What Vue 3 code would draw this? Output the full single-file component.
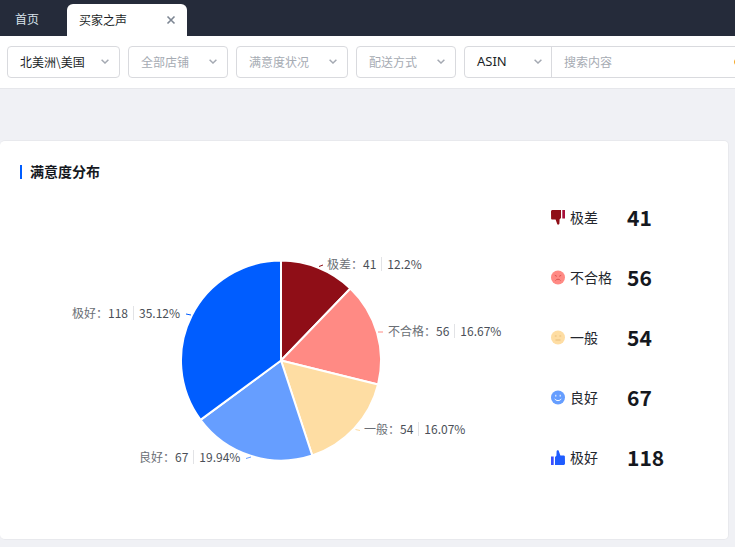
<script setup>
const filters = [
  { text: '北美洲\\美国', width: 113, active: true },
  { text: '全部店铺', width: 100 },
  { text: '满意度状况', width: 112 },
  { text: '配送方式', width: 100 },
]

const cx = 281
const cy = 170.5
const r = 100

const slices = [
  { name: '极差', value: 41, pct: '12.2%', pctValue: 12.2, color: '#8f0e17', x: 327, y: 65, line: 'M319 76.500L323 75' },
  { name: '不合格', value: 56, pct: '16.67%', pctValue: 16.67, color: '#ff8a84', x: 388, y: 132, line: 'M378 142L383 142' },
  { name: '一般', value: 54, pct: '16.07%', pctValue: 16.07, color: '#fedda3', x: 364, y: 230, line: 'M355.500 239.500L360 240.500' },
  { name: '良好', value: 67, pct: '19.94%', pctValue: 19.94, color: '#669eff', x: 139, y: 258, line: 'M246 268.500L251 267' },
  { name: '极好', value: 118, pct: '35.12%', pctValue: 35.12, color: '#005dff', x: 72, y: 114, line: 'M186 124L191 125' },
]

function point(angle) {
  const a = (angle - 90) * Math.PI / 180
  return `${(cx + r * Math.cos(a)).toFixed(2)} ${(cy + r * Math.sin(a)).toFixed(2)}`
}

let acc = 0
const wedges = slices.map((s) => {
  const start = acc * 3.6
  acc += s.pctValue
  const end = acc * 3.6
  const large = end - start > 180 ? 1 : 0
  return { ...s, d: `M${cx} ${cy}L${point(start)}A${r} ${r} 0 ${large} 1 ${point(end)}Z` }
})

const legend = [
  { key: 'down', name: '极差', value: 41 },
  { key: 'bad', name: '不合格', value: 56 },
  { key: 'mid', name: '一般', value: 54 },
  { key: 'good', name: '良好', value: 67 },
  { key: 'up', name: '极好', value: 118 },
]
</script>

<template>
  <div class="page">
    <header class="tabs">
      <div class="tab"><span>首页</span></div>
      <div class="tab tab-active">
        <span>买家之声</span>
        <svg class="close" width="10" height="10" viewBox="0 0 10 10">
          <path d="M1.500 1.500L8.500 8.500M8.500 1.500L1.500 8.500" stroke="#7d8693" stroke-width="1.600" fill="none" />
        </svg>
      </div>
    </header>

    <section class="filters">
      <div
        v-for="f in filters"
        :key="f.text"
        class="select"
        :class="{ active: f.active }"
        :style="{ width: f.width + 'px' }"
      >
        <span>{{ f.text }}</span>
        <svg class="chev" width="8" height="5" viewBox="0 0 8 5">
          <path d="M.6.8L4 4L7.400.8" stroke="#a4a9b2" stroke-width="1.500" fill="none" />
        </svg>
      </div>
      <div class="search">
        <div class="asin">
          <span>ASIN</span>
          <svg class="chev" width="8" height="5" viewBox="0 0 8 5">
            <path d="M.6.8L4 4L7.400.8" stroke="#a4a9b2" stroke-width="1.500" fill="none" />
          </svg>
        </div>
        <div class="input">
          <span>搜索内容</span>
          <i class="search-icon"></i>
        </div>
      </div>
    </section>

    <main class="content">
      <section class="card">
        <h2 class="title"><span>满意度分布</span></h2>
        <div class="body">
          <div class="chart">
            <svg class="pie" width="530" height="330" viewBox="0 0 530 330">
              <path v-for="w in wedges" :key="w.name" :d="w.d" :fill="w.color" stroke="#fff" stroke-width="2" stroke-linejoin="round" />
              <path v-for="w in wedges" :key="w.name + 'l'" :d="w.line" :stroke="w.color" stroke-width="1" fill="none" />
            </svg>
            <div
              v-for="w in wedges"
              :key="w.name + 't'"
              class="label"
              :style="{ left: w.x + 'px', top: w.y + 'px' }"
            >
              <span class="label-name">{{ w.name }}：</span><span>{{ w.value }}</span><i class="sep"></i><span>{{ w.pct }}</span>
            </div>
          </div>

          <ul class="legend">
            <li v-for="l in legend" :key="l.key" class="row">
              <svg class="icon" width="14" height="15" viewBox="0 0 14 15">
                <template v-if="l.key === 'down'">
                  <path d="M0 1.500C0 .7.700 0 1.500 0H10V8L8.600 9.300L8.400 13.500C8.400 14.500 7 15 6.300 14.300L4.600 9.500H1.400C.5 9.500-.1 8.700.1 7.800Z" fill="#8f0e17" />
                  <rect x="11.300" y="0" width="2.700" height="8.500" fill="#a8103a" />
                </template>
                <template v-else-if="l.key === 'up'">
                  <path d="M14 13.500C14 14.300 13.300 15 12.500 15H4V7L5.400 5.700L5.600 1.500C5.600.5 7 0 7.700.7L9.400 5.500H12.600C13.500 5.500 14.100 6.300 13.900 7.200Z" fill="#1f5cff" />
                  <rect x="0" y="6.500" width="2.700" height="8.500" fill="#3a4dff" />
                </template>
                <template v-else-if="l.key === 'bad'">
                  <circle cx="7" cy="7.500" r="7" fill="#ff8a84" />
                  <path d="M3.800 5.300L5.800 6.300M10.200 5.300L8.200 6.300" stroke="#d9534f" stroke-width="1" fill="none" />
                  <path d="M4.500 10.500C5.500 8.800 8.500 8.800 9.500 10.500" stroke="#d9534f" stroke-width="1" fill="none" />
                </template>
                <template v-else-if="l.key === 'mid'">
                  <circle cx="7" cy="7.500" r="7" fill="#fedda3" />
                  <path d="M3.800 6H5.600M8.400 6H10.200M4.500 10H9.500" stroke="#e8bd7a" stroke-width="1" fill="none" />
                </template>
                <template v-else>
                  <circle cx="7" cy="7.500" r="7" fill="#669eff" />
                  <path d="M4.800 4.800V6.600M9.200 4.800V6.600" stroke="#fff" stroke-width="1" fill="none" />
                  <path d="M3.800 8.800C5 11.200 9 11.200 10.200 8.800" stroke="#fff" stroke-width="1" fill="none" />
                </template>
              </svg>
              <span class="name">{{ l.name }}</span>
              <span class="num">{{ l.value }}</span>
            </li>
          </ul>
        </div>
      </section>
    </main>
  </div>
</template>

<style>
html, body {
  margin: 0;
  background: #f0f1f5;
  overflow: hidden;
}
</style>

<style scoped>
.page {
  width: 735px;
  height: 547px;
  overflow: hidden;
  background: #f0f1f5;
  font-family: "Noto Sans CJK SC", "Noto Sans", sans-serif;
  font-size: 12px;
  color: #1b1f27;
}
.tabs {
  height: 36px;
  box-sizing: border-box;
  padding-top: 4px;
  background: #252b3a;
  display: flex;
  align-items: stretch;
}
.tab {
  width: 67px;
  box-sizing: border-box;
  padding: 0 0 3px 15px;
  color: #d9e2ea;
  display: flex;
  align-items: center;
}
.tab-active {
  width: 120px;
  padding: 0 11px 2px 12px;
  justify-content: space-between;
  background: #fff;
  color: #1b1f27;
  border-radius: 6px 6px 0 0;
}
.close {
  margin-top: 2px;
}
.filters {
  height: 53px;
  box-sizing: border-box;
  padding: 10px 0 10px 7px;
  display: flex;
  gap: 8px;
  background: #fff;
  border-bottom: 1px solid #e6e7eb;
  overflow: hidden;
}
.select {
  flex: none;
  height: 32px;
  box-sizing: border-box;
  padding: 0 10px 2px 12px;
  display: flex;
  align-items: center;
  justify-content: space-between;
  border: 1px solid #d9dade;
  border-radius: 4px;
  color: #a6abb3;
}
.chev {
  margin-top: 1px;
}
.select.active {
  color: #1b1f27;
}
.search {
  flex: none;
  width: 290px;
  height: 32px;
  box-sizing: border-box;
  display: flex;
  border: 1px solid #d9dade;
  border-radius: 4px;
}
.asin {
  flex: none;
  width: 87px;
  box-sizing: border-box;
  padding: 0 9px 2px 12px;
  display: flex;
  align-items: center;
  justify-content: space-between;
  border-right: 1px solid #d9dade;
  font-family: "Noto Sans", sans-serif;
  font-size: 13px;
}
.input {
  flex: 1;
  padding: 0 0 2px 12px;
  display: flex;
  align-items: center;
  justify-content: space-between;
  color: #a6abb3;
}
.search-icon {
  width: 10px;
  height: 10px;
  margin: 2px 9px 0 0;
  border: 1.500px solid #f5a623;
  border-radius: 50%;
  box-sizing: border-box;
}
.content {
  padding: 51px 6px 7px 0;
}
.card {
  position: relative;
  height: 400px;
  box-sizing: border-box;
  background: #fff;
  border: 1px solid #e8e9ed;
  border-left: 0;
  border-radius: 5px;
  padding-top: 24px;
}
.title {
  margin: 0 0 0 20px;
  padding-left: 8px;
  border-left: 2px solid #005dff;
  height: 14px;
  display: flex;
  align-items: center;
  font-size: 14px;
  font-weight: 700;
  color: #15181e;
}
.title span {
  margin-top: -2px;
}
.body {
  display: flex;
  margin-top: 11px;
}
.chart {
  position: relative;
  flex: none;
  width: 551px;
  height: 330px;
}
.pie {
  display: block;
}
.label {
  position: absolute;
  white-space: nowrap;
  font-size: 12px;
  line-height: 18px;
  display: flex;
  align-items: center;
  color: #4a4f57;
}
.label-name {
  color: #6b6f76;
}
.sep {
  width: 1px;
  height: 14px;
  margin: 0 5px;
  background: #e2e3e6;
}
.legend {
  list-style: none;
  margin: -3px 0 0;
  padding: 0;
  flex: 1;
}
.row {
  height: 60px;
  display: flex;
  align-items: center;
}
.icon {
  flex: none;
  margin-right: 5px;
}
.name {
  width: 57px;
  font-size: 14px;
  color: #23262d;
}
.num {
  font-size: 21px;
  font-weight: 700;
  color: #15181e;
}
</style>
